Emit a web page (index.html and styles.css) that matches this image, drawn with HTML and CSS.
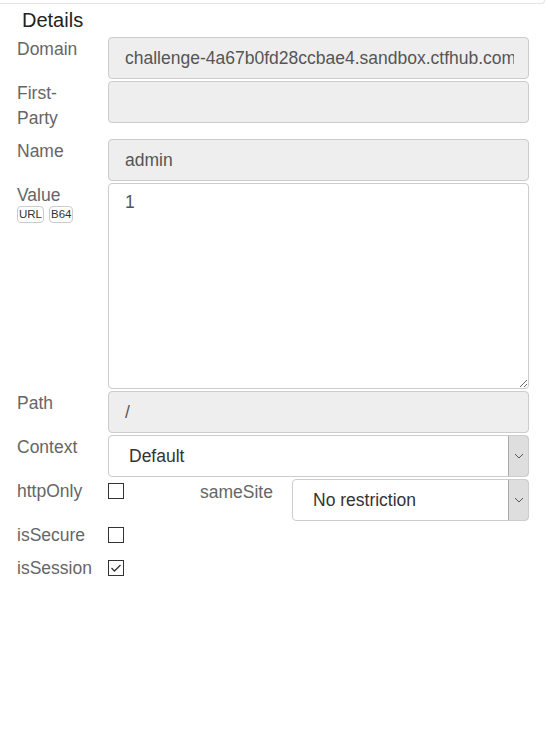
FILE: index.html
```html
<!DOCTYPE html>
<html>
<head>
<meta charset="utf-8">
<link rel="stylesheet" href="styles.css">
</head>
<body>
<div class="topbar"></div>
<h2 class="title">Details</h2>
<div class="form">
  <div class="row">
    <div class="label">Domain</div>
    <div class="field ro"><span class="val">challenge-4a67b0fd28ccbae4.sandbox.ctfhub.com</span></div>
  </div>
  <div class="row">
    <div class="label">First-Party</div>
    <div class="field ro"><span class="val"></span></div>
  </div>
  <div class="row">
    <div class="label">Name</div>
    <div class="field ro"><span class="val">admin</span></div>
  </div>
  <div class="row">
    <div class="label">Value
      <div class="badges"><span class="badge">URL</span><span class="badge">B64</span></div>
    </div>
    <textarea class="area">1</textarea>
  </div>
  <div class="row">
    <div class="label">Path</div>
    <div class="field ro"><span class="val">/</span></div>
  </div>
  <div class="row">
    <div class="label">Context</div>
    <div class="field select"><span class="sel-text">Default</span><span class="arrow"><svg width="10" height="6" viewBox="0 0 10 6"><path d="M1 1 L5 5 L9 1" fill="none" stroke="#555" stroke-width="1"/></svg></span></div>
  </div>
  <div class="row">
    <div class="label">httpOnly</div>
    <div class="cbcell"><span class="cb"></span></div>
    <div class="label mid">sameSite</div>
    <div class="field select narrow"><span class="sel-text">No restriction</span><span class="arrow"><svg width="10" height="6" viewBox="0 0 10 6"><path d="M1 1 L5 5 L9 1" fill="none" stroke="#555" stroke-width="1"/></svg></span></div>
  </div>
  <div class="row">
    <div class="label">isSecure</div>
    <div class="cbcell"><span class="cb"></span></div>
  </div>
  <div class="row">
    <div class="label">isSession</div>
    <div class="cbcell"><span class="cb"><svg width="14" height="14" viewBox="0 0 14 14"><path d="M2.5 7 L5.5 10 L11.5 4" fill="none" stroke="#333" stroke-width="1.3"/></svg></span></div>
  </div>
</div>
</body>
</html>
```

FILE: styles.css
```css
html, body {
  margin: 0;
  padding: 0;
  background: #fff;
  font-family: "Liberation Sans", Arial, sans-serif;
}
.topbar {
  height: 3px;
  margin-right: 3px;
  border-bottom: 1px solid #e3e3e3;
  border-right: 1px solid #e3e3e3;
  border-bottom-right-radius: 4px;
}
.title {
  margin: 4px 0 0 22px;
  font-size: 20px;
  font-weight: normal;
  line-height: 24px;
  color: #222;
}
.form {
  margin-top: 5px;
  padding-left: 17px;
  width: 512px;
}
.row {
  display: flex;
  align-items: flex-start;
  margin-bottom: 2px;
}
.label {
  box-sizing: border-box;
  width: 91px;
  padding-right: 12px;
  flex: none;
  font-size: 17.5px;
  line-height: 25px;
  color: #666;
  padding-bottom: 6px;
}
.label.mid {
  width: 92px;
  padding-top: 1px;
}
.field {
  box-sizing: border-box;
  width: 421px;
  height: 42px;
  border: 1px solid #ccc;
  border-radius: 4px;
  display: flex;
  align-items: center;
  font-size: 17.5px;
  line-height: 25px;
  overflow: hidden;
}
.ro {
  background: #eee;
  color: #555;
  padding: 0 14px 0 16px;
}
.val {
  white-space: nowrap;
  overflow: hidden;
}
.area {
  box-sizing: border-box;
  width: 421px;
  height: 206px;
  margin: 0;
  border: 1px solid #ccc;
  border-radius: 4px;
  padding: 6px 16px;
  font-family: "Liberation Sans", Arial, sans-serif;
  font-size: 17.5px;
  line-height: 25px;
  color: #555;
  background: #fff;
  outline: none;
}
.badges {
  display: flex;
  gap: 5px;
  margin-top: -2px;
}
.badge {
  box-sizing: border-box;
  height: 17px;
  padding: 0 1px;
  border: 1px solid #ccc;
  border-radius: 4px;
  font-size: 11.5px;
  line-height: 15px;
  color: #333;
  background: #fff;
}
.select {
  background: #fff;
  color: #333;
  justify-content: space-between;
}
.select.narrow {
  width: 237px;
}
.sel-text {
  padding-left: 20px;
}
.arrow {
  box-sizing: border-box;
  width: 21px;
  height: 42px;
  margin: -1px -1px -1px 0;
  border: 1px solid #aaa;
  border-radius: 0 4px 4px 0;
  background: #dedede;
  display: flex;
  align-items: center;
  justify-content: center;
  flex: none;
}
.cbcell {
  width: 92px;
  flex: none;
  padding-top: 4px;
}
.cb {
  box-sizing: border-box;
  display: flex;
  align-items: center;
  justify-content: center;
  width: 16px;
  height: 16px;
  border: 1px solid #333;
  background: #fff;
}
```
